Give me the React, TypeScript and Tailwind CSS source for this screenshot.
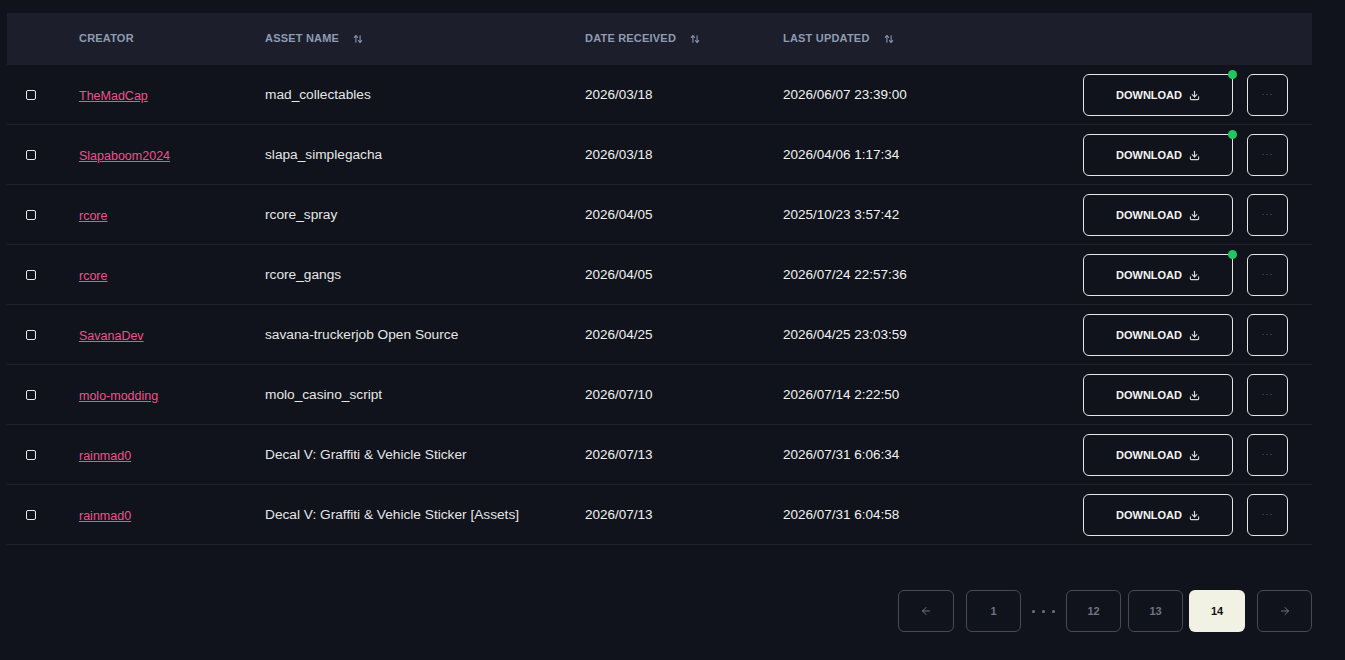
import { ArrowLeft, ArrowRight, ArrowUpDown, Download } from "lucide-react";

type Row = {
    creator: string;
    asset: string;
    received: string;
    updated: string;
    fresh?: boolean;
};

const rows: Row[] = [
    { creator: "TheMadCap", asset: "mad_collectables", received: "2026/03/18", updated: "2026/06/07 23:39:00", fresh: true },
    { creator: "Slapaboom2024", asset: "slapa_simplegacha", received: "2026/03/18", updated: "2026/04/06 1:17:34", fresh: true },
    { creator: "rcore", asset: "rcore_spray", received: "2026/04/05", updated: "2025/10/23 3:57:42" },
    { creator: "rcore", asset: "rcore_gangs", received: "2026/04/05", updated: "2026/07/24 22:57:36", fresh: true },
    { creator: "SavanaDev", asset: "savana-truckerjob Open Source", received: "2026/04/25", updated: "2026/04/25 23:03:59" },
    { creator: "molo-modding", asset: "molo_casino_script", received: "2026/07/10", updated: "2026/07/14 2:22:50" },
    { creator: "rainmad0", asset: "Decal V: Graffiti & Vehicle Sticker", received: "2026/07/13", updated: "2026/07/31 6:06:34" },
    { creator: "rainmad0", asset: "Decal V: Graffiti & Vehicle Sticker [Assets]", received: "2026/07/13", updated: "2026/07/31 6:04:58" },
];

function SortIcon() {
    return <ArrowUpDown className="w-[10px] h-[10px] ml-[14px] text-[#8e9bb3]" strokeWidth={2.5} />;
}

function PageBtn({ children, active, w = "w-[55px]" }: { children: React.ReactNode; active?: boolean; w?: string }) {
    return (
        <button
            className={`${w} h-[42px] rounded-md flex items-center justify-center text-[11px] font-bold ${
                active ? "bg-[#f1f1e4] text-[#111318]" : "border border-[#464a53] text-[#6f7480]"
            }`}
        >
            {children}
        </button>
    );
}

export default function App() {
    return (
        <div className="min-h-[660px] bg-[#10131b] pt-[13px] pl-[7px] pr-[33px] font-['Liberation_Sans',Arial,sans-serif]">
            <div className="w-[1305px]">
                {/* header */}
                <div className="flex items-center h-[52px] bg-[#1c1f2b] text-[11px] font-bold uppercase tracking-[0.2px] text-[#8e9bb3]">
                    <div className="w-[72px]" />
                    <div className="w-[186px] pb-[1px]">Creator</div>
                    <div className="w-[320px] flex items-center pb-[1px]">Asset Name<SortIcon /></div>
                    <div className="w-[198px] flex items-center pb-[1px]">Date Received<SortIcon /></div>
                    <div className="flex items-center pb-[1px]">Last Updated<SortIcon /></div>
                </div>
                {rows.map((r, i) => (
                    <div key={i} className="flex items-center h-[60px] border-b border-[#1e212c]">
                        <div className="w-[72px] pl-[19px]">
                            <div className="w-[10px] h-[10px] border-[1.5px] border-[#e8e8e8] rounded-[2px]" />
                        </div>
                        <div className="w-[186px] pt-[1px]">
                            <a className="text-[12.5px] text-[#f0508c] underline underline-offset-1">{r.creator}</a>
                        </div>
                        <div className="w-[320px] pt-[2px] text-[13.7px] text-[#e6e6e6]">{r.asset}</div>
                        <div className="w-[198px] pt-[2px] text-[13.5px] text-[#f2f2f2]">{r.received}</div>
                        <div className="flex-1 pt-[2px] text-[13.5px] text-[#f2f2f2]">{r.updated}</div>
                        <div className="flex items-center gap-[14px] pr-[24px]">
                            <button className="relative w-[150px] h-[42px] pt-[2px] border border-[#e6e6e6] rounded-md flex items-center justify-center gap-[7px] text-[11px] font-bold text-[#f4f4f4]">
                                DOWNLOAD
                                <Download className="w-[11px] h-[11px] text-[#d8d8d8]" strokeWidth={2.5} />
                                {r.fresh && (
                                    <span className="absolute -top-[5px] -right-[5px] w-[9px] h-[9px] rounded-full bg-[#22c55e]" />
                                )}
                            </button>
                            <button className="w-[41px] h-[42px] border border-[#e6e6e6] rounded-md flex items-center justify-center text-[9px] text-[#5f6470] tracking-[1px]">
                                ···
                            </button>
                        </div>
                    </div>
                ))}
                {/* pagination */}
                <div className="flex items-center justify-end mt-[45px]">
                    <PageBtn w="w-[56px]">
                        <ArrowLeft className="w-[12px] h-[12px]" />
                    </PageBtn>
                    <div className="ml-[12px]">
                        <PageBtn>1</PageBtn>
                    </div>
                    <div className="w-[45px] flex items-center justify-center gap-[7px]">
                        <span className="w-[3px] h-[3px] rounded-full bg-[#6f7480]" />
                        <span className="w-[3px] h-[3px] rounded-full bg-[#6f7480]" />
                        <span className="w-[3px] h-[3px] rounded-full bg-[#6f7480]" />
                    </div>
                    <PageBtn>12</PageBtn>
                    <div className="ml-[7px]">
                        <PageBtn>13</PageBtn>
                    </div>
                    <div className="ml-[6px]">
                        <PageBtn active w="w-[56px]">14</PageBtn>
                    </div>
                    <div className="ml-[12px]">
                        <PageBtn>
                            <ArrowRight className="w-[12px] h-[12px]" />
                        </PageBtn>
                    </div>
                </div>
            </div>
        </div>
    );
}
